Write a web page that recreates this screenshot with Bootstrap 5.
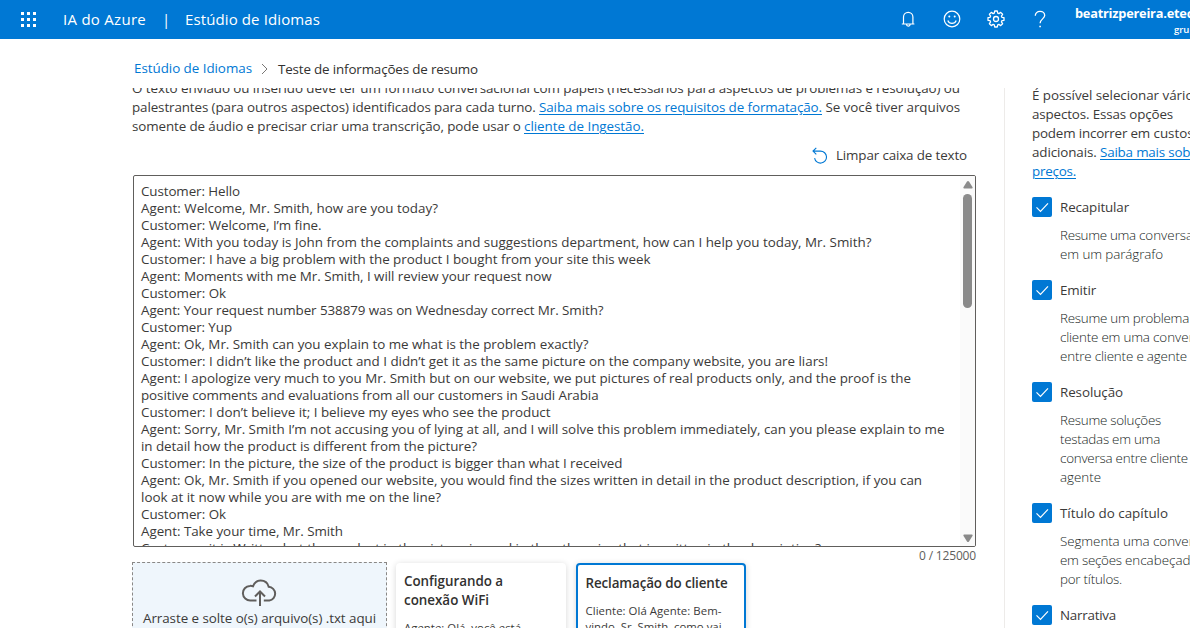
<!DOCTYPE html>
<html lang="pt-BR">
<head>
<meta charset="utf-8">
<meta name="viewport" content="width=device-width, initial-scale=1">
<title>Estúdio de Idiomas</title>
<link href="https://cdn.jsdelivr.net/npm/bootstrap@5.3.0/dist/css/bootstrap.min.css" rel="stylesheet">
<style>
body{font-family:"Open Sans","Noto Sans",sans-serif;font-size:13.4px;line-height:19px;color:#3b3a39;background:#fff}
a{color:#0078d4}
.copy a{text-decoration-thickness:1px;text-underline-offset:2px}
.ln{display:block;white-space:nowrap}
.fit{white-space:nowrap;display:inline-block}
.topbar{height:39px;background:#0078d4;color:#fff}
.brand{font-size:15px;line-height:20px;margin-top:-1px}
.waffle{margin-left:20px;width:17px}
.account{width:115px;white-space:nowrap}
.account .who{font-weight:700;font-size:12.8px;line-height:16px;margin-top:1px}
.account .org{font-size:9.5px;line-height:12px;font-weight:600;margin-left:99px;margin-top:3px}
.tools{gap:26px;margin-right:1px}
.tools>svg{margin-top:-1px}
.tools .account{margin-right:-1px}
.crumbs{height:49px;padding:21px 0 0 134px;color:#323130}
.crumbs a{margin-top:-1px}
.view{height:540px}
.left-col{width:1004px;padding-left:132px;flex:none}
.copy{margin-top:-9px}
.clear-btn{height:39px;margin-right:37px}
.convo{margin-left:1px;width:843px;height:372px;border:1px solid #605e5c;border-radius:2px}
.convo-text{padding:7px 0 0 7px;line-height:17px}
.track{width:15px;background:#fafafa;padding:5px 0 4px;margin-left:-1px}
.thumb{width:9px;height:114px;border-radius:5px;background:#8a8a8a;margin-top:5px}
.count{width:844px;font-size:12px;line-height:16px;padding-top:1px;height:16px;color:#605e5c}
.drop{width:255px;height:110px;border:1px dashed #8a8886;background:#eff6fc;padding-top:16px}
.sample{width:170px;height:120px;border-radius:4px;padding:9px 8px;box-shadow:0 1px 6px rgba(0,0,0,.16);background:#fff}
.sample.active{border:2px solid #0078d4;padding:9px 7.5px}
.sample h3{font-size:13.4px;line-height:19px;font-weight:600;margin:0;color:#323130}
.sample p{font-size:11.4px;line-height:16px;margin:10px 0 0}
.right-col{border-left:1px solid #edebe9;padding-left:27px;flex:none;width:260px}
.aspects{margin-top:27px}
.tick{width:20px;height:20px;border-radius:2px;background:#0078d4;flex:none}
.desc{font-weight:300;margin:9px 0 16px 28px;color:#201f1e}
</style>
</head>
<body class="overflow-hidden vh-100">
<header class="topbar d-flex align-items-center">
  <svg class="waffle" height="17" viewBox="0 0 17 17" fill="#fff"><path d="M1 1h3v3H1zM7 1h3v3H7zM13 1h3v3h-3zM1 7h3v3H1zM7 7h3v3H7zM13 7h3v3h-3zM1 13h3v3H1zM7 13h3v3H7zM13 13h3v3h-3z"/></svg>
  <div class="brand d-flex ms-4">
    <span class="fit" data-w="83" style="margin-left:2px">IA do Azure</span>
    <span style="margin-left:16px;width:6px">|</span>
    <span class="fit" data-w="135" style="margin-left:17px">Estúdio de Idiomas</span>
  </div>
  <div class="tools d-flex ms-auto align-items-center">
    <svg width="18" height="18" viewBox="0 0 18 18" fill="none" stroke="#fff" stroke-width="1.2"><path d="M4.500 14V7a4.700 4.700 0 0 1 9.400 0v7M2.800 14h12.600M7.500 14.300a1.800 1.800 0 0 0 3.600 0"/></svg>
    <svg width="18" height="18" viewBox="0 0 18 18" fill="none" stroke="#fff" stroke-width="1.2"><circle cx="9" cy="9" r="7.800"/><path d="M4.800 10.500a4.500 4.500 0 0 0 8.400 0"/><circle cx="6.300" cy="6.600" r="1" fill="#fff" stroke="none"/><circle cx="11.700" cy="6.600" r="1" fill="#fff" stroke="none"/></svg>
    <svg width="18" height="18" viewBox="0 0 18 18" fill="none" stroke="#fff" stroke-width="1.300" stroke-linejoin="round"><path d="M7.700 1h2.600l.4 2.100 1.200.5 1.800-1.200 1.900 1.900-1.200 1.800.5 1.200 2.100.4v2.600l-2.100.4-.5 1.200 1.200 1.800-1.900 1.900-1.800-1.200-1.200.5-.4 2.100H7.700l-.4-2.100-1.200-.5-1.800 1.200-1.900-1.900 1.200-1.800-.5-1.200L1 10.300V7.700l2.100-.4.5-1.200-1.200-1.800 1.900-1.900 1.800 1.200 1.200-.5z"/><circle cx="9" cy="9" r="2.500"/></svg>
    <svg width="18" height="18" viewBox="0 0 18 18" fill="none" stroke="#fff" stroke-width="1.300"><path d="M4.300 5.800C4.300 3.200 6.200 1.400 9 1.400s4.700 1.700 4.700 4.100c0 3.200-4.600 3.700-4.600 7.700"/><path d="M8.300 16.500h1.600" stroke-width="1.600"/></svg>
    <div class="account">
      <div class="who"><span class="fit" data-w="118">beatrizpereira.etec</span></div>
      <div class="org">grupo</div>
    </div>
  </div>
</header>
<nav class="crumbs d-flex">
  <a class="text-decoration-none fit" data-w="118" href="#">Estúdio de Idiomas</a>
  <svg width="8" height="12" viewBox="0 0 8 12" fill="none" stroke="#797775" style="margin:3px 9px 0"><path d="M1 1l5 5-5 5"/></svg>
  <span class="fit" data-w="200">Teste de informações de resumo</span>
</nav>
<main class="view d-flex overflow-hidden">
  <section class="left-col">
    <div class="copy">
      <div class="ln"><span class="fit" data-w="828">O texto enviado ou inserido deve ter um formato conversacional com papéis (necessários para aspectos de problemas e resolução) ou</span></div>
      <div class="ln"><span class="fit" data-w="407">palestrantes (para outros aspectos) identificados para cada turno.&nbsp;</span><a href="#" class="fit" data-w="283">Saiba mais sobre os requisitos de formatação.</a><span class="fit" data-w="138">&nbsp;Se você tiver arquivos</span></div>
      <div class="ln"><span class="fit" data-w="392">somente de áudio e precisar criar uma transcrição, pode usar o&nbsp;</span><a href="#" class="fit" data-w="120">cliente de Ingestão.</a></div>
    </div>
    <div class="clear-btn d-flex justify-content-end align-items-center">
      <svg width="16" height="17" viewBox="0 0 16 17" fill="none" stroke="#0078d4" stroke-width="1.100"><path d="M4.300.8L1 4.100l3.300 3.200M1 4.100h7.500a6 6 0 1 1-5.900 7"/></svg>
      <span class="fit" data-w="131" style="margin-left:8px">Limpar caixa de texto</span>
    </div>
    <div class="convo d-flex overflow-hidden">
      <div class="convo-text flex-grow-1">
        <div class="ln"><span class="fit" data-w="99">Customer: Hello</span></div>
        <div class="ln"><span class="fit" data-w="297">Agent: Welcome, Mr. Smith, how are you today?</span></div>
        <div class="ln"><span class="fit" data-w="180.500">Customer: Welcome, I’m fine.</span></div>
        <div class="ln"><span class="fit" data-w="730.500">Agent: With you today is John from the complaints and suggestions department, how can I help you today, Mr. Smith?</span></div>
        <div class="ln"><span class="fit" data-w="509.500">Customer: I have a big problem with the product I bought from your site this week</span></div>
        <div class="ln"><span class="fit" data-w="410.500">Agent: Moments with me Mr. Smith, I will review your request now</span></div>
        <div class="ln"><span class="fit" data-w="85">Customer: Ok</span></div>
        <div class="ln"><span class="fit" data-w="462.500">Agent: Your request number 538879 was on Wednesday correct Mr. Smith?</span></div>
        <div class="ln"><span class="fit" data-w="91">Customer: Yup</span></div>
        <div class="ln"><span class="fit" data-w="447.500">Agent: Ok, Mr. Smith can you explain to me what is the problem exactly?</span></div>
        <div class="ln"><span class="fit" data-w="687">Customer: I didn’t like the product and I didn’t get it as the same picture on the company website, you are liars!</span></div>
        <div class="ln"><span class="fit" data-w="770">Agent: I apologize very much to you Mr. Smith but on our website, we put pictures of real products only, and the proof is the</span></div>
        <div class="ln"><span class="fit" data-w="457.500">positive comments and evaluations from all our customers in Saudi Arabia</span></div>
        <div class="ln"><span class="fit" data-w="409.500">Customer: I don’t believe it; I believe my eyes who see the product</span></div>
        <div class="ln"><span class="fit" data-w="803.500">Agent: Sorry, Mr. Smith I’m not accusing you of lying at all, and I will solve this problem immediately, can you please explain to me</span></div>
        <div class="ln"><span class="fit" data-w="336">in detail how the product is different from the picture?</span></div>
        <div class="ln"><span class="fit" data-w="481.500">Customer: In the picture, the size of the product is bigger than what I received</span></div>
        <div class="ln"><span class="fit" data-w="781">Agent: Ok, Mr. Smith if you opened our website, you would find the sizes written in detail in the product description, if you can</span></div>
        <div class="ln"><span class="fit" data-w="300">look at it now while you are with me on the line?</span></div>
        <div class="ln"><span class="fit" data-w="85">Customer: Ok</span></div>
        <div class="ln"><span class="fit" data-w="202">Agent: Take your time, Mr. Smith</span></div>
        <div class="ln"><span class="fit" data-w="680">Customer: it is Written but the product in the picture is used in the other size that is written in the description?</span></div>
      </div>
      <div class="track d-flex flex-column align-items-center">
        <svg width="10" height="8" viewBox="0 0 10 8" fill="#8a8a8a"><path d="M4 .6Q5-.5 6 .6L9.600 6.200Q9.800 7.500 8.800 7.500H1.200Q.2 7.500.4 6.200z"/></svg>
        <div class="thumb"></div>
        <svg class="mt-auto" width="10" height="8" viewBox="0 0 10 8" fill="#8a8a8a"><path d="M4 7.400Q5 8.500 6 7.400L9.600 1.800Q9.800.5 8.800.5H1.200Q.2.5.4 1.800z"/></svg>
      </div>
    </div>
    <div class="count text-end"><span class="fit" data-w="57">0 / 125000</span></div>
    <div class="d-flex align-items-start" style="margin-top:-1px">
      <div class="drop text-center">
        <svg class="d-block mx-auto" width="38" height="27" viewBox="0 0 38 27" fill="none" stroke="#605e5c" stroke-width="2"><path d="M15.500 21.500H9.500a7.300 7.300 0 0 1-.6-14.600 7 7 0 0 1 3.100.4C13.500 3.500 16.300 1.500 19.700 1.500c4 0 7 2.400 8 6.300a6.900 6.900 0 0 1 .6 13.700h-5.500M19 27V13.500M14 17.500l5-5 5 5"/></svg>
        <div style="margin-top:3px"><span class="fit" data-w="233">Arraste e solte o(s) arquivo(s) .txt aqui</span></div>
      </div>
      <div class="sample" style="margin:1px 0 0 9px">
        <h3><span class="ln"><span class="fit" data-w="99">Configurando a</span></span><span class="ln"><span class="fit" data-w="85">conexão WiFi</span></span></h3>
        <p><span class="fit" data-w="117">Agente: Olá, você está</span></p>
      </div>
      <div class="sample active" style="margin:1px 0 0 10px">
        <h3><span class="fit" data-w="142">Reclamação do cliente</span></h3>
        <p><span class="ln"><span class="fit" data-w="136">Cliente: Olá Agente: Bem-</span></span><span class="ln"><span class="fit" data-w="136">vindo, Sr. Smith, como vai</span></span></p>
      </div>
    </div>
  </section>
  <aside class="right-col">
    <div class="copy" style="margin-top:-2px">
      <div class="ln"><span class="fit" data-w="127">É possível selecionar</span> vários</div>
      <div class="ln"><span class="fit" data-w="141">aspectos. Essas opções</span></div>
      <div class="ln"><span class="fit" data-w="118">podem incorrer em</span> custos</div>
      <div class="ln"><span class="fit" data-w="68">adicionais.&nbsp;</span><a href="#" class="fit" data-w="103">Saiba mais sobre</a></div>
      <div class="ln"><a href="#" class="fit" data-w="44">preços.</a></div>
    </div>
    <div class="aspects pt-0">
      <div style="margin-top:-11px"></div>
      <div class="aspect"><div class="d-flex align-items-center gap-2"><span class="tick"><svg class="d-block" width="20" height="20" fill="none" stroke="#fff" stroke-width="1.200"><path d="M4.500 10.300l4 4 7.500-8"/></svg></span><span class="fit" data-w="69">Recapitular</span></div>
        <div class="desc"><div class="ln"><span class="fit" data-w="79">Resume uma&nbsp;</span>conversa</div><div class="ln"><span class="fit" data-w="103">em um parágrafo</span></div></div></div>
      <div class="aspect"><div class="d-flex align-items-center gap-2"><span class="tick"><svg class="d-block" width="20" height="20" fill="none" stroke="#fff" stroke-width="1.200"><path d="M4.500 10.300l4 4 7.500-8"/></svg></span><span class="fit" data-w="36">Emitir</span></div>
        <div class="desc"><div class="ln"><span class="fit" data-w="129">Resume um problema</span> do</div><div class="ln"><span class="fit" data-w="93">cliente em uma&nbsp;</span>conversa</div><div class="ln"><span class="fit" data-w="127">entre cliente e agente</span></div></div></div>
      <div class="aspect"><div class="d-flex align-items-center gap-2"><span class="tick"><svg class="d-block" width="20" height="20" fill="none" stroke="#fff" stroke-width="1.200"><path d="M4.500 10.300l4 4 7.500-8"/></svg></span><span class="fit" data-w="63">Resolução</span></div>
        <div class="desc"><div class="ln"><span class="fit" data-w="101">Resume soluções</span></div><div class="ln"><span class="fit" data-w="100">testadas em uma</span></div><div class="ln"><span class="fit" data-w="128">conversa entre cliente</span> e</div><div class="ln"><span class="fit" data-w="41">agente</span></div></div></div>
      <div class="aspect"><div class="d-flex align-items-center gap-2"><span class="tick"><svg class="d-block" width="20" height="20" fill="none" stroke="#fff" stroke-width="1.200"><path d="M4.500 10.300l4 4 7.500-8"/></svg></span><span class="fit" data-w="108">Título do capítulo</span></div>
        <div class="desc"><div class="ln"><span class="fit" data-w="93">Segmenta uma&nbsp;</span>conversa</div><div class="ln"><span class="fit" data-w="65">em seções&nbsp;</span>encabeçadas</div><div class="ln"><span class="fit" data-w="62">por títulos.</span></div></div></div>
      <div class="aspect"><div class="d-flex align-items-center gap-2"><span class="tick"><svg class="d-block" width="20" height="20" fill="none" stroke="#fff" stroke-width="1.200"><path d="M4.500 10.300l4 4 7.500-8"/></svg></span><span class="fit" data-w="56">Narrativa</span></div></div>
    </div>
  </aside>
</main>
<script src="https://cdn.jsdelivr.net/npm/bootstrap@5.3.0/dist/js/bootstrap.bundle.min.js"></script>
<script>
// Tracks each line so that it fills its set measure.
document.querySelectorAll('.fit').forEach(function (el) {
  var n = Array.from(el.textContent).length;
  var w = el.getBoundingClientRect().width;
  el.style.letterSpacing = ((parseFloat(el.dataset.w) - w) / n) + 'px';
});
</script>
</body>
</html>
